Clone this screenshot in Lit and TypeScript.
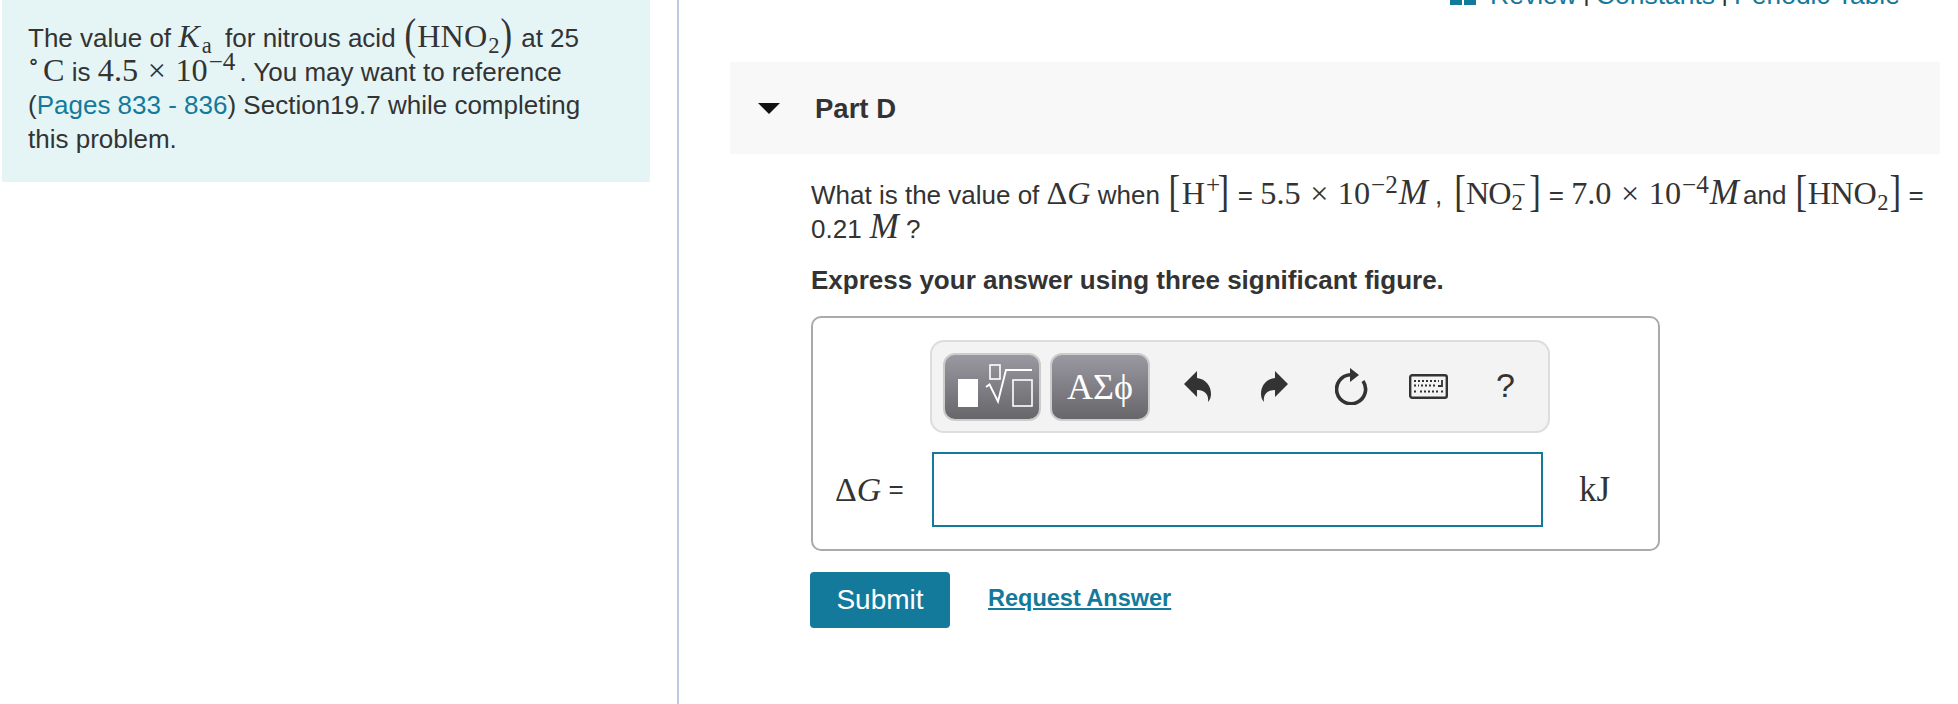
import { LitElement, html, css } from "lit";
import { customElement } from "lit/decorators.js";

@customElement("app-root")
export class AppRoot extends LitElement {
  static styles = css`
    :host { display: flex; width: 1958px; height: 704px; overflow: hidden; background: #fff; color: #333;
      font-family: "Liberation Sans", Arial, sans-serif; font-size: 26px; }
    .left { width: 675px; height: 704px; flex: none; border-right: 2px solid #bccbe2; padding-left: 2px; }
    .info { width: 648px; height: 182px; box-sizing: border-box; background: #e5f5f6; padding: 22px 0 0 26px; line-height: 33.7px; white-space: nowrap; }
    a { color: #147a9b; text-decoration: none; }
    .m { font-family: "Liberation Serif", "DejaVu Serif", serif; font-size: 1.24em; line-height: 0; word-spacing: 1.5px; }
    .m i { font-style: italic; }
    .m i.mm { font-size: 1.08em; margin-left: 1px; }
    .m sub, .m sup { font-size: 0.7em; line-height: 0; }
    .m sup { vertical-align: 0.44em; font-size: 0.78em; margin-left: 1px; }
    .m sub { vertical-align: -0.26em; margin-left: 1px; }
    .m sub.ka { margin: 0 6px 0 2px; }
    .m sub.stack { margin-right: -11px; }
    .m sup.deg { font-size: 0.7em; margin: 0 4px 0 0; vertical-align: 0.5em; }
    .m sup.wide { margin-right: 4px; }
    .m.no { letter-spacing: -1px; margin-left: 3px; }
    .m.hno { letter-spacing: -0.4px; margin-right: -1px; }
    .m.tight { margin-right: -3px; }
    .big { font-size: 1.35em; font-weight: 400; line-height: 0; vertical-align: -0.04em; transform: scaleX(0.8); display: inline-block; }
    .big.end { margin-left: -4px; }
    .big.end.no { margin-left: 3px; }
    .right { flex: 1; min-width: 0; display: flex; flex-direction: column; }
    .top { height: 6px; overflow: hidden; display: flex; justify-content: flex-end; align-items: flex-end; padding-right: 58px; gap: 14px; font-size: 26.5px; line-height: 24px; }
    .top svg { flex: none; }
    .top span { color: #333; }
    .top .lnk { display: flex; gap: 6px; margin-bottom: -1px; white-space: pre; }
    .band { margin: 56px 18px 0 51px; height: 92px; background: #f8f8f8; display: flex; align-items: center; padding-left: 28px; gap: 35px; font-weight: 700; font-size: 27.5px; }
    .band span { margin-top: 2px; }
    .band svg { flex: none; }
    .content { margin-left: 132px; }
    .q { margin-top: 24px; line-height: 34px; white-space: nowrap; }
    .ins { margin-top: 17px; font-weight: 700; line-height: 34px; }
    .box { margin-top: 19px; width: 849px; height: 235px; box-sizing: border-box; border: 2px solid #aaa; border-radius: 10px; display: grid; grid-template-columns: 119px 618px 1fr; grid-template-rows: 93px 75px; row-gap: 19px; padding-top: 22px; }
    .toolbar { grid-column: 2; grid-row: 1; margin-left: -2px; background: #f3f3f3; border: 2px solid #ddd; border-radius: 14px; box-sizing: border-box; display: flex; align-items: center; padding-left: 11px; }
    .tb { height: 68px; box-sizing: border-box; border: 2px solid #ccc; border-radius: 12px; background: linear-gradient(#9a98a1, #67666a); display: flex; align-items: center; justify-content: center; color: #fff; flex: none; padding: 0; }
    .tb1 { width: 98px; margin-right: 9px; }
    .tb2 { width: 100px; margin-right: 9px; font-family: "Liberation Serif", serif; font-size: 36px; }
    .slot { width: 77px; flex: none; display: flex; align-items: center; justify-content: center; color: #333; }
    .help { font-size: 34px; margin-top: -3px; }
    .label { grid-column: 1; grid-row: 2; display: flex; align-items: center; padding-left: 22px; white-space: nowrap; }
    .label .m { font-size: 1.3em; line-height: 1; }
    .input { grid-column: 2; grid-row: 2; width: 611px; height: 75px; box-sizing: border-box; border: 2px solid #147a9b; }
    .unit { grid-column: 3; grid-row: 2; display: flex; align-items: center; padding-left: 29px; font-family: "Liberation Serif", serif; font-size: 35px; }
    .actions { margin-top: 21px; display: flex; align-items: center; gap: 38px; margin-left: -1px; }
    .submit { width: 140px; height: 56px; background: #147a9b; color: #fff; border: none; border-radius: 4px; font: 28px "Liberation Sans", Arial, sans-serif; padding: 0; }
    .req { font-weight: 700; font-size: 23.5px; text-decoration: underline; margin-top: -4px; }
  `;

  render() {
    return html`
      <div class="left">
        <div class="info">
          The value of <span class="m"><i>K</i><sub class="ka">a</sub></span>&nbsp;for nitrous acid <span class="m"><span class="big">(</span>HNO<sub>2</sub><span class="big">)</span></span> at 25<br />
          <span class="m"><sup class="deg">∘</sup>C</span> is <span class="m">4.5 × 10<sup class="wide">−4</sup></span>. You may want to reference<br />
          (<a href="#">Pages 833 - 836</a>) Section19.7 while completing<br />
          this problem.
        </div>
      </div>
      <div class="right">
        <div class="top">
          <svg width="26" height="6" viewBox="0 0 26 6"><path d="M0 0h12v5H0zM14 0h12v5H14z" fill="#147a9b"/></svg>
          <div class="lnk"><a href="#">Review</a> <span>|</span> <a href="#">Constants</a> <span>|</span> <a href="#">Periodic Table</a></div>
        </div>
        <div class="band">
          <svg width="22" height="11" viewBox="0 0 22 11"><path d="M0 0h22L11 11z" fill="#111"/></svg>
          <span>Part D</span>
        </div>
        <div class="content">
          <div class="q">
            What is the value of <span class="m">Δ<i>G</i></span> when <span class="m"><span class="big">[</span>H<sup>+</sup><span class="big end">]</span></span> = <span class="m">5.5 × 10<sup>−2</sup><i class="mm">M</i></span> , <span class="m no"><span class="big">[</span>NO<sub class="stack">2</sub><sup>−</sup><span class="big end no">]</span></span> = <span class="m tight">7.0 × 10<sup>−4</sup><i class="mm">M</i></span> and <span class="m hno"><span class="big">[</span>HNO<sub>2</sub><span class="big">]</span></span> =<br />
            0.21 <span class="m"><i class="mm">M</i></span> ?
          </div>
          <div class="ins">Express your answer using three significant figure.</div>
          <div class="box">
            <div class="toolbar">
              <button class="tb tb1" aria-label="Templates">
                <svg width="94" height="64" viewBox="2 2 94 64">
                  <rect x="15" y="26" width="20" height="28" fill="#fff"/>
                  <rect x="47" y="12" width="10" height="14" fill="none" stroke="#fff" stroke-width="1.6"/>
                  <path d="M43 34l3.500-2.500 8.500 17 8-31.500h26" fill="none" stroke="#fff" stroke-width="1.9"/>
                  <rect x="70" y="27" width="19" height="26" fill="none" stroke="#fff" stroke-width="1.6"/>
                </svg>
              </button>
              <button class="tb tb2">ΑΣϕ</button>
              <div class="slot">
                <svg width="27" height="31" viewBox="0 0 27 31"><path d="M0 13L13 0v7c9 1 14 8 14 16 0 3-1 6-3 8 1-6-2-12-11-12v7z" fill="#333"/></svg>
              </div>
              <div class="slot">
                <svg width="27" height="31" viewBox="0 0 27 31"><g transform="matrix(-1 0 0 1 27 0)"><path d="M0 13L13 0v7c9 1 14 8 14 16 0 3-1 6-3 8 1-6-2-12-11-12v7z" fill="#333"/></g></svg>
              </div>
              <div class="slot">
                <svg width="34" height="37" viewBox="0 0 34 37"><path d="M28 13A14.5 14.5 0 1 1 15 6.8" fill="none" stroke="#333" stroke-width="3.6"/><path d="M15 0l9 7-9 7z" fill="#333"/></svg>
              </div>
              <div class="slot">
                <svg width="39" height="25" viewBox="0 0 39 25">
                  <rect x="1.200" y="1.200" width="36.600" height="22.600" rx="2" fill="#f3f3f3" stroke="#333" stroke-width="2.400"/>
                  <path d="M5 7h25M5 11.500h5M12 11.500h14M5 17.500h2M11 17.500h18M32 17.500h2" stroke="#333" stroke-width="1.800" stroke-dasharray="2 2" fill="none"/>
                  <path d="M33 6v6h-4" stroke="#333" stroke-width="1.800" fill="none"/>
                </svg>
              </div>
              <div class="slot help">?</div>
            </div>
            <div class="label"><span class="m">Δ<i>G</i></span>&nbsp;=</div>
            <div class="input"></div>
            <div class="unit">kJ</div>
          </div>
          <div class="actions">
            <button class="submit">Submit</button>
            <a class="req" href="#">Request Answer</a>
          </div>
        </div>
      </div>
    `;
  }
}
